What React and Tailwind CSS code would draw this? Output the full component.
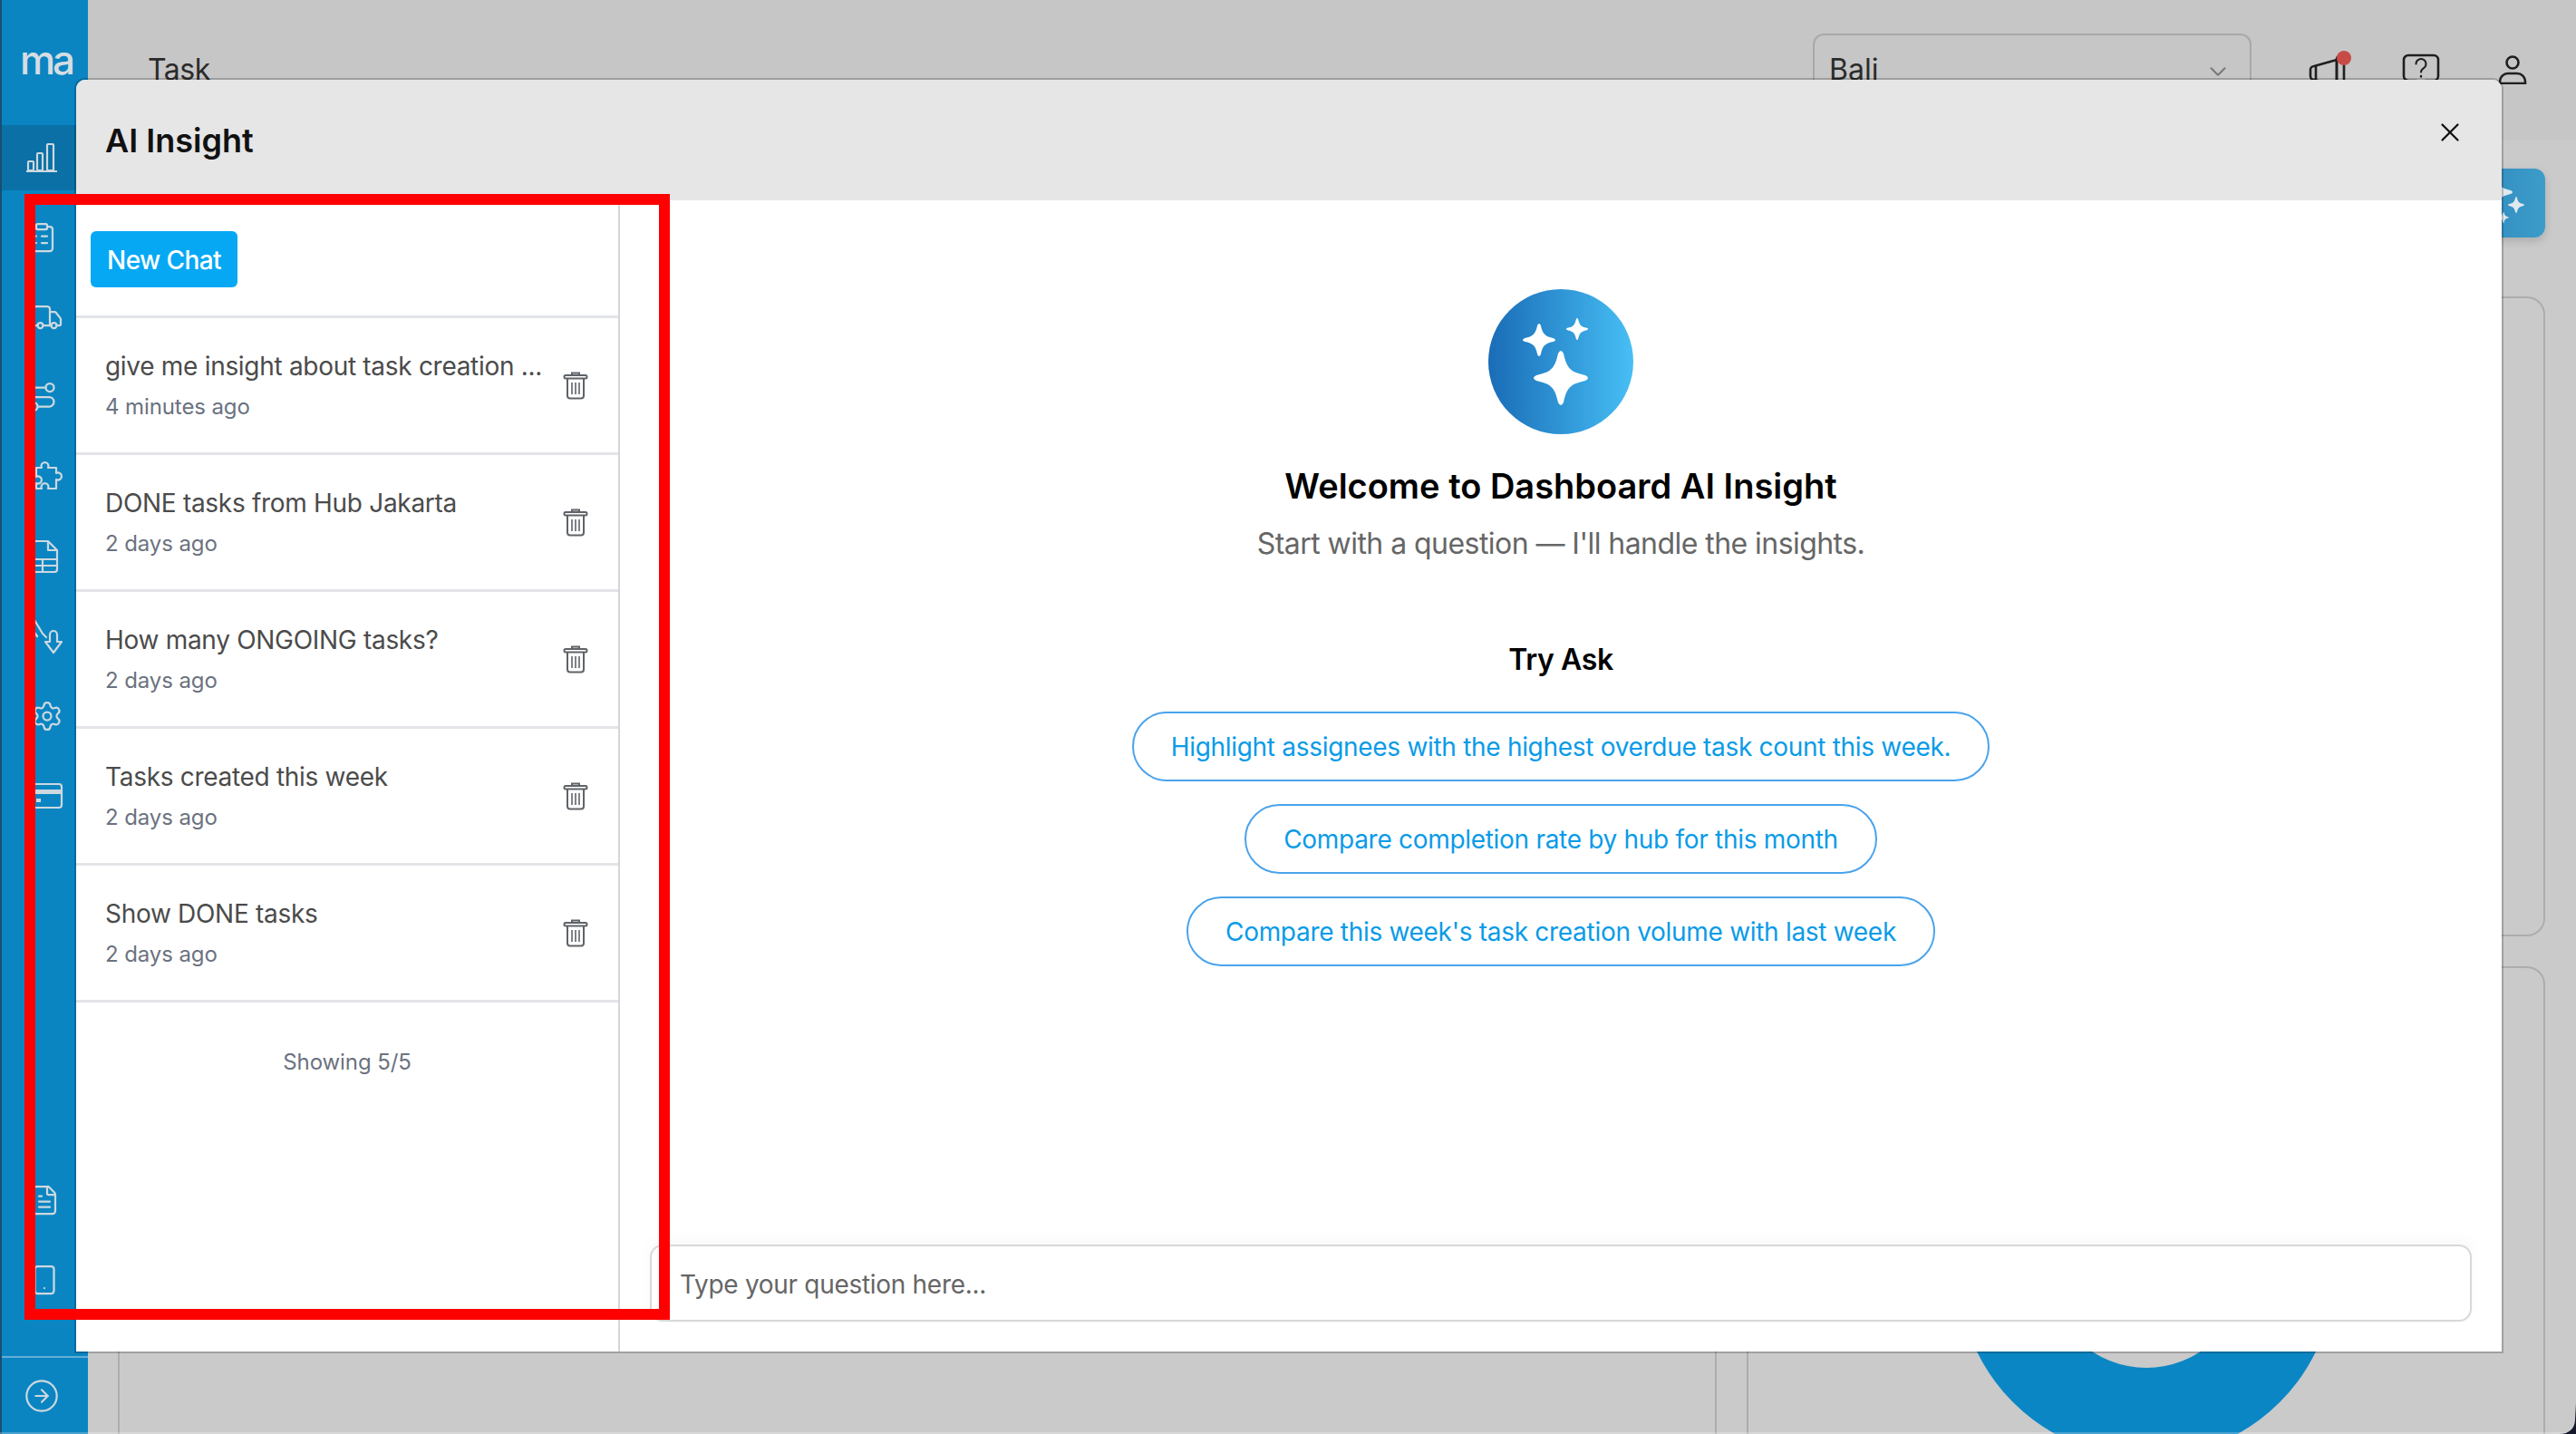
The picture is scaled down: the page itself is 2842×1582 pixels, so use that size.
import {
  ClipboardList,
  Truck,
  Route,
  Settings,
  FileText,
  Smartphone,
  CircleArrowRight,
  ChevronDown,
  X,
} from 'lucide-react';

const chats = [
  { title: 'give me insight about task creation ...', time: '4 minutes ago' },
  { title: 'DONE tasks from Hub Jakarta', time: '2 days ago' },
  { title: 'How many ONGOING tasks?', time: '2 days ago' },
  { title: 'Tasks created this week', time: '2 days ago' },
  { title: 'Show DONE tasks', time: '2 days ago' },
];

const prompts = [
  'Highlight assignees with the highest overdue task count this week.',
  'Compare completion rate by hub for this month',
  "Compare this week's task creation volume with last week",
];

function starPath(cx, cy, r) {
  const t = r * 0.1;
  const k = r * 0.22;
  return `M${cx - t} ${cy - r + t}Q${cx} ${cy - r - t} ${cx + t} ${cy - r + t}C${cx + k} ${cy - k * 1.6} ${cx + k * 1.6} ${cy - k} ${cx + r - t} ${cy - t}Q${cx + r + t} ${cy} ${cx + r - t} ${cy + t}C${cx + k * 1.6} ${cy + k} ${cx + k} ${cy + k * 1.6} ${cx + t} ${cy + r - t}Q${cx} ${cy + r + t} ${cx - t} ${cy + r - t}C${cx - k} ${cy + k * 1.6} ${cx - k * 1.6} ${cy + k} ${cx - r + t} ${cy + t}Q${cx - r - t} ${cy} ${cx - r + t} ${cy - t}C${cx - k * 1.6} ${cy - k} ${cx - k} ${cy - k * 1.6} ${cx - t} ${cy - r + t}Z`;
}

function BarsIcon() {
  return (
    <svg width="36" height="34" viewBox="0 0 36 34" fill="none" stroke="currentColor" strokeWidth="2.2" className="-ml-[6px]">
      <rect x="3" y="21" width="6" height="10" rx="1" />
      <rect x="13" y="12" width="6" height="19" rx="1" />
      <rect x="24" y="2" width="7" height="29" rx="1" />
      <path d="M1 32h34" />
    </svg>
  );
}

function PuzzleIcon() {
  return (
    <svg width="36" height="36" viewBox="0 0 36 36" fill="none" stroke="currentColor" strokeWidth="2.2" strokeLinejoin="round">
      <path d="M6 8h6a4 4 0 1 1 7 0h9v6a4 4 0 1 1 0 7v10h-9a4 4 0 1 0-7 0H6v-6a4 4 0 1 0 0-7z" />
    </svg>
  );
}

function SheetIcon() {
  return (
    <svg width="36" height="36" viewBox="0 0 36 36" fill="none" stroke="currentColor" strokeWidth="2.2" strokeLinejoin="round" className="-ml-[2px]">
      <path d="M8 1h13l10 10v21a3 3 0 0 1-3 3H8a3 3 0 0 1-3-3V4a3 3 0 0 1 3-3z" />
      <path d="M21 1v10h10M5 21h26M5 28h26M15 21v14" />
    </svg>
  );
}

function TapIcon() {
  return (
    <svg width="36" height="40" viewBox="0 0 36 40" fill="none" stroke="currentColor" strokeWidth="2.2" strokeLinejoin="round" strokeLinecap="round">
      <path d="M4 2l9 15 4 4" />
      <path d="M4 2L0 10l7 10" />
      <path d="M21 22v-4a4 4 0 0 1 8 0v8h5l-9 12-9-12h5z" />
    </svg>
  );
}

function CardIcon() {
  return (
    <svg width="36" height="30" viewBox="0 0 36 30" fill="none" stroke="currentColor" strokeWidth="2.2">
      <rect x="2" y="2" width="32" height="26" rx="3" />
      <path d="M2 10.500h32" strokeWidth="5" />
      <path d="M6 20h5" strokeWidth="4" />
    </svg>
  );
}

function TrashIcon() {
  return (
    <svg width="28" height="32" viewBox="0 0 28 32" fill="none" stroke="#5f6368" strokeWidth="2">
      <path d="M10 5V2.500h8V5" />
      <rect x="1.500" y="5" width="25" height="3.500" rx="1.500" />
      <path d="M5 8.500v19a3 3 0 0 0 3 3h12a3 3 0 0 0 3-3v-19" />
      <path d="M10 13v13M14 13v13M18 13v13" strokeWidth="1.600" />
    </svg>
  );
}

function MegaphoneIcon() {
  return (
    <svg width="48" height="44" viewBox="0 0 48 44" fill="none" stroke="#1f1f1f" strokeWidth="2.600" strokeLinejoin="round">
      <path d="M32 6L7 13a4 4 0 0 0-4 4v7a4 4 0 0 0 4 4l25 6z" />
      <path d="M9 13v15M12 29l3 12h8l-3-10" />
      <rect x="32" y="2" width="8" height="38" rx="3" />
    </svg>
  );
}

function HelpIcon() {
  return (
    <svg width="42" height="36" viewBox="0 0 42 36" fill="none" stroke="#1f1f1f" strokeWidth="2.600" strokeLinecap="round" strokeLinejoin="round">
      <path d="M7 2h28a5 5 0 0 1 5 5v18a5 5 0 0 1-5 5h-9l-5 5-5-5H7a5 5 0 0 1-5-5V7a5 5 0 0 1 5-5z" />
      <path d="M15.500 11.500a5.500 5.500 0 1 1 8.500 4.600c-2 1.300-3 2.400-3 4.400" strokeWidth="2" />
      <path d="M21 25v.5" strokeWidth="2.400" />
    </svg>
  );
}

function UserIcon() {
  return (
    <svg width="32" height="32" viewBox="0 0 32 32" fill="none" stroke="#1f1f1f" strokeWidth="2.600">
      <circle cx="16" cy="8" r="6.500" />
      <path d="M2 31v-2a9 9 0 0 1 9-9h10a9 9 0 0 1 9 9v2z" />
    </svg>
  );
}

function NavItem({ children, active, className = 'pl-[32px]' }) {
  return (
    <div className={`h-[72px] flex items-center ${className} ${active ? 'bg-[#0a70a6]' : ''}`}>
      {children}
    </div>
  );
}

function Sidebar() {
  const icon = { size: 36, strokeWidth: 1.5 };
  return (
    <aside className="w-[97px] shrink-0 h-full flex flex-col bg-[#0a85c2] text-[#cdd8df] border-l-[2px] border-[#174f73]">
      <div className="h-[138px] shrink-0 pt-[44px] pl-[20px]">
        <span className="text-[44px] leading-[44px] font-medium tracking-[-3px] text-[#d5dde2]">ma</span>
      </div>
      <nav className="flex flex-col gap-4">
        <NavItem active><BarsIcon /></NavItem>
        <NavItem className="pl-[26px]"><ClipboardList {...icon} /></NavItem>
        <NavItem><Truck {...icon} /></NavItem>
        <NavItem className="pl-[26px]"><Route {...icon} /></NavItem>
        <NavItem><PuzzleIcon /></NavItem>
        <NavItem><SheetIcon /></NavItem>
        <NavItem><TapIcon /></NavItem>
        <NavItem><Settings {...icon} /></NavItem>
        <NavItem><CardIcon /></NavItem>
      </nav>
      <div className="mt-auto flex flex-col gap-4 mb-[48px]">
        <NavItem className="pl-[29px]"><FileText {...icon} /></NavItem>
        <NavItem className="pl-[29px]"><Smartphone {...icon} /></NavItem>
      </div>
      <div className="h-[86px] shrink-0 border-t-[2px] border-[#63aed6] flex items-center pl-[24px]">
        <CircleArrowRight size={40} strokeWidth={1.3} />
      </div>
    </aside>
  );
}

function Background() {
  return (
    <div className="flex-1 min-w-0 flex flex-col bg-[#cacaca]">
      <header className="h-[155px] shrink-0 bg-[#c6c6c6] flex items-start pt-[37px] pl-[66px] pr-[54px]">
        <div className="h-[80px] flex items-center text-[32px] tracking-[-0.5px] text-[#2b2b2b]">Task</div>
        <div className="ml-auto w-[484px] h-[80px] border-2 border-[#a8a8a8] rounded-[12px] flex items-center justify-between pl-[16px] pr-[20px] text-[32px] text-[#2b2b2b]">
          Bali
          <ChevronDown size={30} strokeWidth={1.6} color="#777" className="mt-1" />
        </div>
        <div className="ml-[62px] h-[80px] flex items-center">
          <div className="relative w-[48px] flex justify-center mt-[10px]">
            <MegaphoneIcon />
            <span className="absolute right-0 top-[-4px] w-[16px] h-[16px] rounded-full bg-[#c84b48]" />
          </div>
          <div className="ml-[56px]"><HelpIcon /></div>
          <div className="ml-[64px]"><UserIcon /></div>
        </div>
      </header>
      <div className="pt-[31px] pl-[33px] pr-[34px] flex flex-col gap-[65px]">
        <div className="flex justify-end">
          <div className="w-[100px] h-[76px] rounded-[12px] bg-gradient-to-r from-[#2f86bd] to-[#3c9cc9] shadow-[0_4px_10px_rgba(0,0,0,0.15)] flex items-center justify-end pr-[14px]">
            <svg width="70" height="60" viewBox="0 0 70 60" fill="#dfe9ef">
              <path d={starPath(28, 18, 20)} />
              <path d={starPath(52, 32, 9)} />
              <path d={starPath(38, 46, 6)} />
            </svg>
          </div>
        </div>
        <div className="grid grid-cols-[1764px_881px] gap-[33px]">
          <div className="h-[1400px] border-2 border-[#adadad] rounded-[20px]" />
          <div className="flex flex-col gap-[33px]">
            <div className="h-[706px] border-2 border-[#adadad] rounded-[20px]" />
            <div className="h-[700px] border-2 border-[#adadad] rounded-[20px] flex justify-center pt-[124px]">
              <svg width="416" height="416" viewBox="0 0 416 416" fill="none" className="shrink-0">
                <circle cx="208" cy="208" r="158.500" stroke="#0b86c4" strokeWidth="99" />
              </svg>
            </div>
          </div>
        </div>
      </div>
    </div>
  );
}

function ChatHistory() {
  return (
    <div className="w-[600px] shrink-0 h-full flex flex-col border-r-2 border-[#d6d6da]">
      <div className="h-[130px] shrink-0 pl-[16px] pt-[34px] border-b-[3px] border-[#e2e4e8]">
        <button className="w-[162px] h-[62px] pt-[2px] rounded-[6px] bg-[#06a8f4] text-white text-[28px] font-medium tracking-[-0.6px]">New Chat</button>
      </div>
      {chats.map((chat) => (
        <div key={chat.title} className="h-[151px] shrink-0 border-b-[3px] border-[#e2e4e8] pl-[32px] pr-[33px] flex items-center justify-between">
          <div className="min-w-0">
            <div className="text-[28px] leading-[40px] tracking-[-0.3px] text-[#4b4b4b]">{chat.title}</div>
            <div className="mt-[8px] text-[24px] leading-[34px] tracking-[-0.1px] text-[#6b7280]">{chat.time}</div>
          </div>
          <TrashIcon />
        </div>
      ))}
      <div className="pt-[49px] text-center text-[24px] leading-[34px] tracking-[-0.1px] text-[#6b7280]">Showing 5/5</div>
    </div>
  );
}

function Welcome() {
  return (
    <div className="flex-1 min-w-0 h-full flex flex-col items-center">
      <div className="pt-[98px] flex flex-col items-center">
        <div className="w-[160px] h-[160px] rounded-full bg-gradient-to-r from-[#1a6cb6] to-[#47bff5]">
          <svg width="160" height="160" viewBox="0 0 160 160" fill="#fff">
            <path d={starPath(80, 98, 30)} />
            <path d={starPath(56, 56, 18)} />
            <path d={starPath(98, 44, 12)} />
          </svg>
        </div>
        <h2 className="mt-[34px] text-[38px] leading-[46px] font-semibold text-black">Welcome to Dashboard AI Insight</h2>
        <p className="mt-[21px] text-[32px] leading-[40px] tracking-[-0.55px] text-[#666]">Start with a question — I'll handle the insights.</p>
        <h3 className="mt-[88px] text-[32px] leading-[40px] tracking-[-0.4px] font-semibold text-black">Try Ask</h3>
        <div className="mt-[37px] flex flex-col items-center gap-[25px]">
          {prompts.map((prompt) => (
            <button key={prompt} className="h-[77px] px-[41px] rounded-full border-2 border-[#4aa3ec] bg-white text-[28px] tracking-[-0.3px] text-[#0a9be8] whitespace-nowrap">
              {prompt}
            </button>
          ))}
        </div>
      </div>
      <div className="mt-auto self-stretch px-[33px] pb-[33px]">
        <input
          placeholder="Type your question here..."
          className="w-full h-[85px] pl-[31px] pr-[32px] pt-[2px] border-2 border-[#d8d8d8] rounded-[14px] bg-white text-[28px] tracking-[-0.3px] outline-none placeholder:text-[#666] shadow-[0_-6px_14px_rgba(0,0,0,0.03)]"
        />
      </div>
    </div>
  );
}

function InsightModal() {
  return (
    <div className="absolute inset-0 pl-[84px] pr-[82px] pt-[88px] pb-[91px]">
      <div className="h-full flex flex-col rounded-t-[10px] overflow-hidden bg-white shadow-[0_0_0_2px_rgba(0,0,0,0.2)]">
        <div className="h-[133px] shrink-0 bg-[#e6e6e6] flex items-center justify-between pl-[32px] pr-[40px]">
          <h1 className="text-[36px] font-semibold text-[#111]">AI Insight</h1>
          <X size={34} strokeWidth={1.6} color="#111" className="-mt-[18px]" />
        </div>
        <div className="flex-1 min-h-0 flex">
          <ChatHistory />
          <Welcome />
        </div>
      </div>
    </div>
  );
}

export default function App() {
  return (
    <div className="relative w-[2842px] h-[1582px] overflow-hidden flex [font-family:Inter,sans-serif]">
      <Sidebar />
      <Background />
      <InsightModal />
      {/* annotation box from the screenshot */}
      <div className="absolute left-[27px] top-[214px] w-[712px] h-[1242px] border-[12px] border-[#ff0000] pointer-events-none" />
      <div className="absolute left-0 right-0 bottom-0 h-[2px] bg-white/25" />
      <svg width="18" height="34" viewBox="0 0 18 34" className="absolute right-0 bottom-0" fill="#14182a">
        <path d="M18 0v34H0c10 0 17-6 17-16z" />
      </svg>
    </div>
  );
}
